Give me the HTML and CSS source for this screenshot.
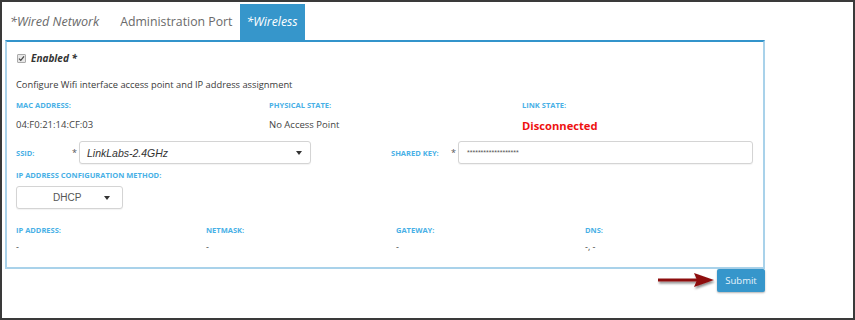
FILE: index.html
```html
<!DOCTYPE html>
<html>
<head>
  <title>Wireless</title>
  <link rel="stylesheet" href="styles.css">
</head>
<body>
  <div class="frame">
    <ul class="tabs">
      <li class="tab italic">*Wired Network</li>
      <li class="tab">Administration Port</li>
      <li class="tab italic active">*Wireless</li>
    </ul>

    <section class="panel">
      <div class="check-row">
        <span class="checkbox">
          <svg width="7" height="7" viewBox="0 0 7 7"><path d="M1 3.6 L2.8 5.4 L6 1.4" fill="none" stroke="#444" stroke-width="1.2"/></svg>
        </span>
        <span class="enabled">Enabled *</span>
      </div>
      <p class="intro">Configure Wifi interface access point and IP address assignment</p>

      <div class="grid three">
        <div class="label">MAC Address:</div>
        <div class="label">Physical State:</div>
        <div class="label">Link State:</div>
        <div class="value">04:F0:21:14:CF:03</div>
        <div class="value">No Access Point</div>
        <div class="value bad">Disconnected</div>
      </div>

      <div class="field-row">
        <div class="label ssid-label">SSID:</div>
        <span class="req">*</span>
        <div class="control ssid">
          <span class="italic-val">LinkLabs-2.4GHz</span>
          <span class="caret"></span>
        </div>
        <div class="label key-label">Shared Key:</div>
        <span class="req">*</span>
        <div class="control key">*******************</div>
      </div>

      <div class="label method-label">IP Address Configuration Method:</div>
      <div class="control method">
        <span>DHCP</span>
        <span class="caret"></span>
      </div>

      <div class="grid four">
        <div class="label">IP Address:</div>
        <div class="label">Netmask:</div>
        <div class="label">Gateway:</div>
        <div class="label">DNS:</div>
        <div class="value small">-</div>
        <div class="value small">-</div>
        <div class="value small">-</div>
        <div class="value small">-, -</div>
      </div>
    </section>

    <div class="actions">
      <svg class="pointer" width="60" height="20" viewBox="0 0 60 20">
        <defs>
          <filter id="sh" x="-20%" y="-50%" width="140%" height="200%">
            <feDropShadow dx="1" dy="2" stdDeviation="1.2" flood-color="#000" flood-opacity="0.45"/>
          </filter>
        </defs>
        <g filter="url(#sh)">
          <rect x="1" y="7.5" width="40" height="3" fill="#8e0f0f"/>
          <path d="M37 2 L57 9 L37 16 L40 9 Z" fill="#8e0f0f"/>
        </g>
      </svg>
      <button class="submit">Submit</button>
    </div>
  </div>
</body>
</html>
```

FILE: styles.css
```css
body {
  margin: 0;
  padding: 0;
  font-family: "Open Sans", "Noto Sans", sans-serif;
  background-color: #fff;
}
.frame {
  width: 855px;
  height: 320px;
  box-sizing: border-box;
  border: 2px solid #3a3a3a;
  padding: 2px 0 0 3px;
}
.tabs {
  list-style: none;
  margin: 0;
  padding: 0;
  display: flex;
  height: 36px;
}
.tab {
  padding: 0 5px;
  margin-right: 2px;
  line-height: 36px;
  font-size: 12.3px;
  color: #6a6a6a;
}
.tab:first-child {
  margin-right: 11px;
  font-size: 12.6px;
}
.italic {
  font-style: italic;
}
.tab.active {
  background-color: #3696cb;
  color: #fff;
  padding: 0 7px;
}
.panel {
  width: 760px;
  box-sizing: border-box;
  border: 2px solid #a9d2ea;
  border-top-color: #3394cb;
  padding: 0 9px 13px 9px;
}
.check-row {
  margin-top: 8px;
  height: 16px;
  display: flex;
  align-items: center;
}
.checkbox {
  width: 7px;
  height: 7px;
  border: 1px solid #aaa;
  border-radius: 1px;
  background: #e8e8e8;
  display: flex;
  margin-left: 1px;
  margin-right: 5px;
}
.enabled {
  font-size: 10px;
  font-weight: bold;
  font-style: italic;
  color: #333;
}
.intro {
  margin: 11px 0 0;
  line-height: 16px;
  font-size: 9.3px;
  color: #3a3a3a;
}
.grid {
  display: grid;
  margin-top: 6px;
}
.grid.three {
  grid-template-columns: 253px 253px 253px;
  row-gap: 6px;
}
.grid.four {
  grid-template-columns: 190px 190px 189px 150px;
  margin-top: 15px;
  row-gap: 4px;
}
.label {
  font-size: 7.5px;
  font-weight: bold;
  text-transform: uppercase;
  color: #48b0e6;
  line-height: 12px;
}
.value {
  font-size: 9.5px;
  color: #444;
  line-height: 16px;
}
.value.small {
  font-size: 9px;
  line-height: 14px;
}
.value.bad {
  color: #ee1111;
  font-weight: bold;
  font-size: 11.2px;
  line-height: 19px;
  margin-top: -1px;
}
.field-row {
  display: flex;
  align-items: center;
  margin-top: 6px;
  height: 23px;
}
.ssid-label {
  width: 56px;
}
.key-label {
  width: 60px;
  margin-left: 80px;
}
.req {
  font-size: 9px;
  color: #555;
  width: 7px;
}
.control {
  height: 23px;
  box-sizing: border-box;
  border: 1px solid #d4d4d4;
  border-radius: 3px;
  display: flex;
  align-items: center;
  background: #fff;
  box-shadow: 0 1px 1px rgba(0, 0, 0, 0.05);
}
.ssid {
  width: 232px;
  padding: 0 8px 0 7px;
  justify-content: space-between;
}
.italic-val {
  font-family: "Liberation Sans", Arial, sans-serif;
  font-style: italic;
  font-size: 10.5px;
  color: #333;
}
.key {
  width: 295px;
  padding-left: 8px;
  font-family: "Liberation Sans", Arial, sans-serif;
  font-size: 7px;
  color: #555;
}
.caret {
  width: 0;
  height: 0;
  border-left: 3.5px solid transparent;
  border-right: 3.5px solid transparent;
  border-top: 4px solid #333;
}
.method-label {
  margin-top: 5px;
}
.method {
  margin-top: 5px;
  width: 107px;
  padding: 0 12px 0 36px;
  justify-content: space-between;
  font-family: "Liberation Sans", Arial, sans-serif;
  font-size: 10px;
  color: #555;
}
.actions {
  width: 760px;
  display: flex;
  justify-content: flex-end;
  align-items: flex-start;
}
.pointer {
  margin-top: 2px;
  margin-right: 0;
}
.submit {
  width: 48px;
  height: 23px;
  border: none;
  border-radius: 2px;
  background-color: #3696cb;
  color: #e8f4fb;
  font-family: "Open Sans", sans-serif;
  font-size: 9.5px;
  padding: 0;
  box-shadow: 0 1px 2px rgba(0, 0, 0, 0.3);
}
```
